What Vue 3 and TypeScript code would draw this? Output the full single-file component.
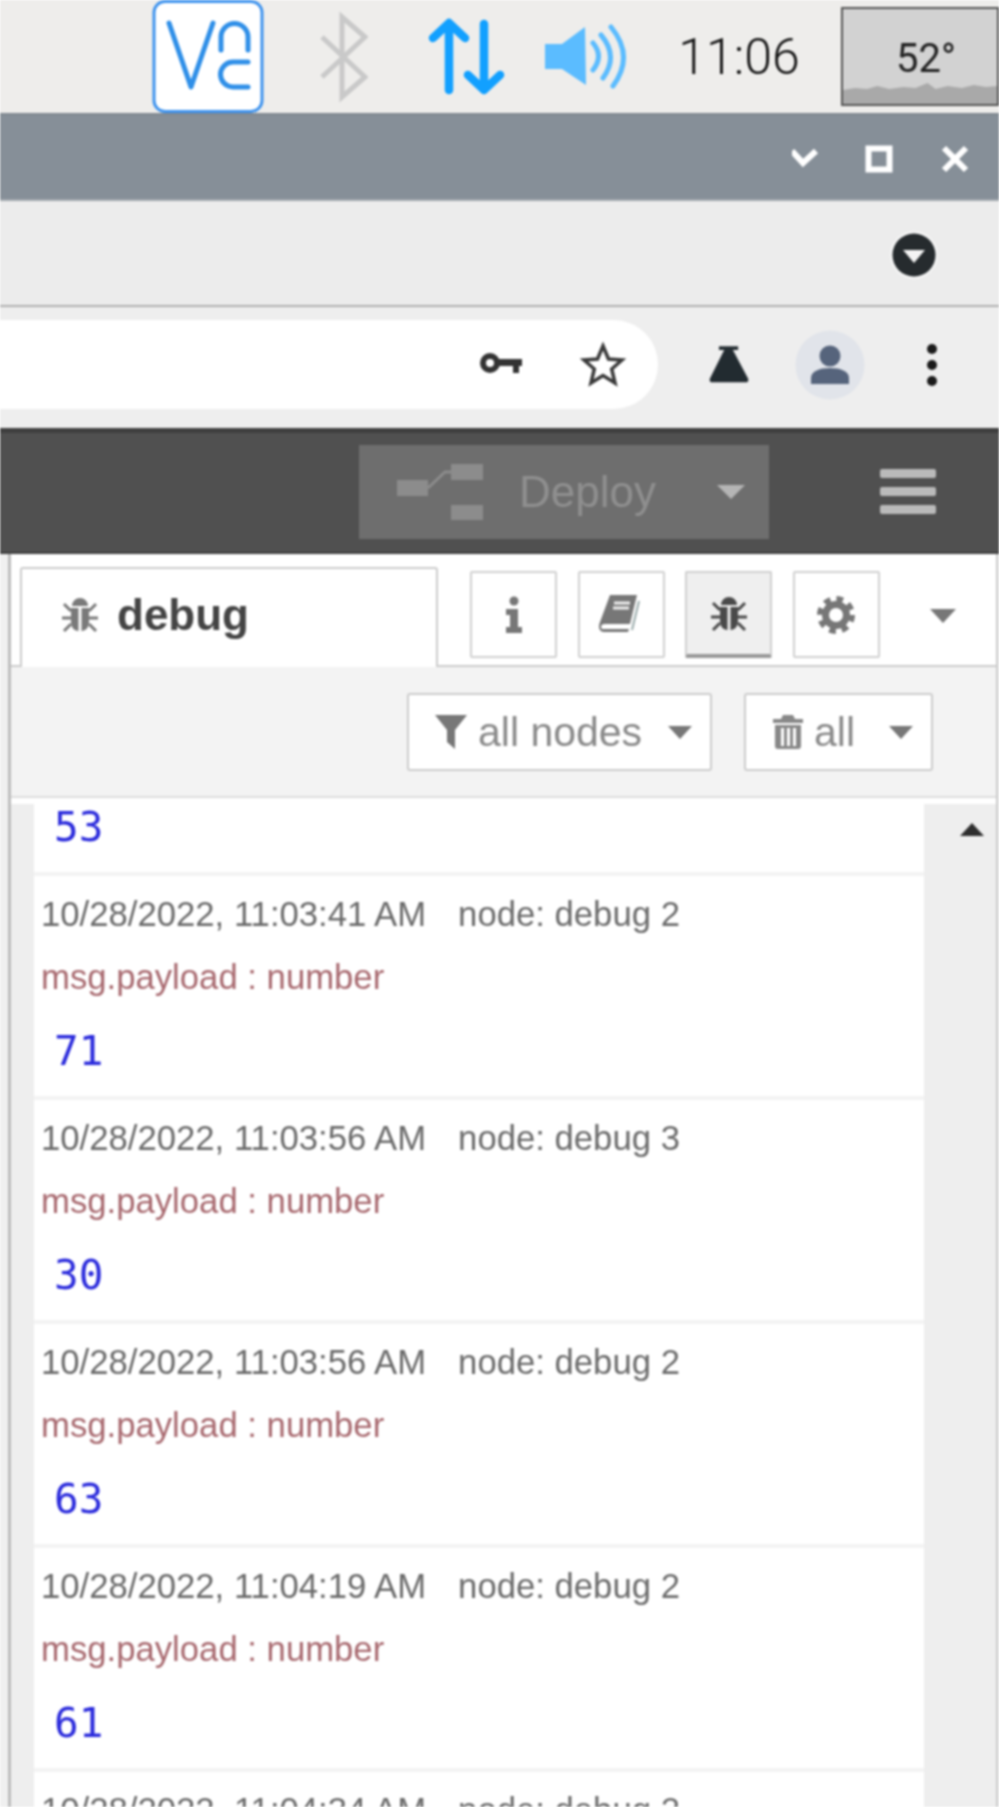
<script setup lang="ts">
interface Entry { time: string; node: string; value: string }
const entries: Entry[] = [
  { time: '10/28/2022, 11:03:41 AM', node: 'debug 2', value: '71' },
  { time: '10/28/2022, 11:03:56 AM', node: 'debug 3', value: '30' },
  { time: '10/28/2022, 11:03:56 AM', node: 'debug 2', value: '63' },
  { time: '10/28/2022, 11:04:19 AM', node: 'debug 2', value: '61' },
  { time: '10/28/2022, 11:04:34 AM', node: 'debug 2', value: '' },
]
const bugLegs = 'M11 16 4 9M11 23H2M11 29 4 36M29 16 36 9M29 23H38M29 29 36 36'
const graph = 'M0 16 L12 14 L24 15 L34 12 L46 15 L60 13 L72 14 L84 9 L92 15 L104 12 L118 14 L130 11 L142 13 L153 12 V30 H0 Z'
</script>

<template>
  <div class="screen">
    <header class="tray">
      <svg class="vnc" viewBox="0 0 112 113" width="112" height="113">
        <rect x="2" y="1.500" width="108" height="110" rx="11" fill="#fff" stroke="#3e93ee" stroke-width="3" />
        <path d="M17 23 39 87 61 23M69 50V37a13.500 13.500 0 0 1 27 0V50M96 62H81a12.500 12.500 0 0 0 0 25H96" fill="none" stroke="#2f8fe8" stroke-width="5" stroke-linecap="round" stroke-linejoin="round" />
      </svg>
      <svg class="bt" viewBox="0 0 50 113" width="50" height="113">
        <path d="M4 37 47 77 24 97V17L47 37 4 77" fill="none" stroke="#c9c9c9" stroke-width="5" />
      </svg>
      <svg class="arrows" viewBox="0 0 77 113" width="77" height="113">
        <path d="M21 90V24M5 38 21 23 37 38M56 24V90M40 75 56 90 72 75" fill="none" stroke="#12a0ff" stroke-width="8.500" stroke-linecap="round" stroke-linejoin="round" />
      </svg>
      <svg class="speaker" viewBox="0 0 84 113" width="84" height="113">
        <path d="M0 44H17L40 27 41 85 17 69H0Z" fill="#5bbcff" />
        <path d="M48 43Q59 56 48 70M56 35Q74 56 58 78M66 27Q90 56 68 86" fill="none" stroke="#5bbcff" stroke-width="5" stroke-linecap="round" />
      </svg>
      <span class="clock">11:06</span>
      <div class="temp">
        <svg class="temp-graph" viewBox="0 0 153 30" preserveAspectRatio="none"><path :d="graph" fill="#a9a9a9" /></svg>
        <span class="temp-text">52°</span>
      </div>
    </header>

    <div class="titlebar">
      <svg viewBox="0 0 180 87" width="180" height="87">
        <path d="M0 37 11 49 24 37" fill="none" stroke="#fff" stroke-width="6" />
        <rect x="76.500" y="34.500" width="21" height="21" fill="none" stroke="#fff" stroke-width="6" />
        <path d="M152 34 174 56M174 34 152 56" fill="none" stroke="#fff" stroke-width="6" />
      </svg>
    </div>

    <div class="tabstrip">
      <svg viewBox="0 0 50 50" width="50" height="50">
        <circle cx="25" cy="25" r="24" fill="#f5f5f5" />
        <circle cx="25" cy="25" r="21.500" fill="#262b2e" />
        <path d="M14 20H36L25 33Z" fill="#f4f4f4" />
      </svg>
    </div>

    <div class="toolbar">
      <div class="omnibox">
        <svg class="key" viewBox="0 0 46 26" width="46" height="26">
          <circle cx="11" cy="11" r="7" fill="none" stroke="#333" stroke-width="6" />
          <path d="M17 7H43V14H40V21H34V14H17Z" fill="#333" />
        </svg>
        <svg class="star" viewBox="0 0 48 48" width="48" height="48">
          <path d="M24 5 29.500 18 43 19 32.700 28 36 42 24 34.500 12 42 15.300 28 5 19 18.500 18Z" fill="none" stroke="#3a3a3a" stroke-width="3.500" />
        </svg>
      </div>
      <svg class="flask" viewBox="0 0 46 42" width="42" height="40">
        <path d="M12 2.500H33" stroke="#222b30" stroke-width="4" />
        <path d="M18 4H27L44 36Q45 40 41 40H5Q1 40 2 36Z" fill="#222b30" />
      </svg>
      <svg class="avatar" viewBox="0 0 70 70" width="70" height="70">
        <circle cx="35" cy="35" r="34.500" fill="#e1e4ea" />
        <circle cx="35" cy="26" r="10.500" fill="#56647c" />
        <path d="M16 54V48C16 41 25 38 35 38S54 41 54 48V54Z" fill="#56647c" />
      </svg>
      <svg class="dots" viewBox="0 0 12 44" width="12" height="44">
        <circle cx="6" cy="6" r="5" fill="#1a1a1a" /><circle cx="6" cy="22" r="5" fill="#1a1a1a" /><circle cx="6" cy="38" r="5" fill="#1a1a1a" />
      </svg>
    </div>

    <div class="nr-header">
      <div class="deploy">
        <svg class="deploy-icon" viewBox="0 0 86 56" width="86" height="56">
          <path d="M0 16H31V32H0ZM54 0H86V16H54ZM54 41H86V57H54Z" fill="#8c8c8c" />
          <path d="M31 24 48 8H54" fill="none" stroke="#8c8c8c" stroke-width="3" />
        </svg>
        <span class="deploy-label">Deploy</span>
        <svg class="deploy-caret" viewBox="0 0 28 16" width="28" height="16"><path d="M0 1H28L14 15Z" fill="#b5b5b5" /></svg>
      </div>
      <div class="hamburger"><i /><i /><i /></div>
    </div>

    <div class="sidebar">
      <div class="panel">
        <div class="tabbar">
          <div class="tab">
            <svg class="bug-svg" viewBox="0 0 40 40" width="40" height="40">
              <path d="M12 11a8 8 0 0 1 16 0ZM11 13H18.500V36C14 36 11 32 11 27ZM21.500 13H29V27C29 32 26 36 21.500 36Z" fill="#7a7a7a" />
              <path :d="bugLegs" stroke="#7a7a7a" stroke-width="3" fill="none" />
            </svg>
            <span class="tab-label">debug</span>
          </div>
          <div class="tool">
            <svg viewBox="0 0 20 38" width="20" height="38">
              <circle cx="10" cy="5" r="4.500" fill="#777" />
              <path d="M2 13H14V31H18V37H2V31H6V19H2Z" fill="#777" />
            </svg>
          </div>
          <div class="tool">
            <svg viewBox="0 0 44 42" width="44" height="42">
              <path d="M11 1H38L31 30H6C2 30 1 33 3 35H30L29 38H5C0 38 -1 33 1 28Z" fill="#777" />
              <path d="M15 9H31M14 14H30" stroke="#eee" stroke-width="3" />
              <path d="M40 7 33 36" stroke="#9aa" stroke-width="2" />
            </svg>
          </div>
          <div class="tool tool-active">
            <svg viewBox="0 0 40 40" width="40" height="40">
              <path d="M12 11a8 8 0 0 1 16 0ZM11 13H18.500V36C14 36 11 32 11 27ZM21.500 13H29V27C29 32 26 36 21.500 36Z" fill="#4a4a4a" />
              <path :d="bugLegs" stroke="#4a4a4a" stroke-width="3" fill="none" />
            </svg>
          </div>
          <div class="tool">
            <svg viewBox="0 0 40 40" width="40" height="40">
              <circle cx="20" cy="20" r="10.500" fill="none" stroke="#777" stroke-width="7" />
              <circle cx="20" cy="20" r="16" fill="none" stroke="#777" stroke-width="6" stroke-dasharray="6.560 6" />
            </svg>
          </div>
          <svg class="tab-caret" viewBox="0 0 26 14" width="26" height="14"><path d="M0 0H26L13 14Z" fill="#777" /></svg>
        </div>

        <div class="filters">
          <button class="filter-btn filter-nodes">
            <svg viewBox="0 0 32 34" width="32" height="34"><path d="M0 0H32L20 15V34L12 27V15Z" fill="#777" /></svg>
            <span>all nodes</span>
            <svg class="btn-caret" viewBox="0 0 24 13" width="24" height="13"><path d="M0 0H24L12 13Z" fill="#777" /></svg>
          </button>
          <button class="filter-btn filter-all">
            <svg viewBox="0 0 30 34" width="30" height="34"><path d="M10 0H20L22 4H30V8H0V4H8ZM2 10H28V31Q28 34 25 34H5Q2 34 2 31ZM8 13V31H11V13ZM14 13V31H17V13ZM20 13V31H23V13Z" fill="#888" fill-rule="evenodd" /></svg>
            <span>all</span>
            <svg class="btn-caret" viewBox="0 0 24 13" width="24" height="13"><path d="M0 0H24L12 13Z" fill="#777" /></svg>
          </button>
        </div>

        <div class="list">
          <div class="gutter" />
          <div class="messages">
            <div class="entry entry-clipped"><div class="value">53</div></div>
            <div v-for="(e, i) in entries" :key="i" class="entry">
              <div class="meta"><span class="time">{{ e.time }}</span><span class="node">node: {{ e.node }}</span></div>
              <div class="type">msg.payload : number</div>
              <div class="value">{{ e.value }}</div>
            </div>
          </div>
          <div class="scrollbar">
            <svg viewBox="0 0 24 13" width="24" height="13"><path d="M0 13 12 0 24 13Z" fill="#2e2e2e" /></svg>
          </div>
        </div>
      </div>
    </div>
  </div>
</template>

<style>
html, body { margin: 0; background: #fff; }
</style>

<style scoped>
.screen {
  width: 999px;
  height: 1807px;
  overflow: hidden;
  display: flex;
  flex-direction: column;
  font-family: "Liberation Sans", Arial, sans-serif;
  filter: blur(0.8px);
}
svg { display: block; flex: none; }

.tray {
  height: 113px;
  flex: none;
  display: flex;
  align-items: center;
  background: #eeedeb;
  padding-left: 152px;
}
.bt { margin-left: 54px; }
.arrows { margin-left: 60px; }
.speaker { margin-left: 40px; }
.clock {
  margin-left: 48px;
  width: 124px;
  font-family: Roboto, sans-serif;
  font-weight: 300;
  font-size: 50px;
  color: #111;
  text-align: center;
}
.temp {
  margin-left: 40px;
  width: 158px;
  height: 99px;
  box-sizing: border-box;
  border: 2px solid #555;
  background: #d2d2d2;
  position: relative;
  display: flex;
  align-items: center;
  justify-content: center;
}
.temp-graph { position: absolute; left: 0; right: 0; bottom: 0; width: 100%; height: 30px; }
.temp-text {
  position: relative;
  top: 2px;
  font-family: Roboto, sans-serif;
  font-size: 40px;
  color: #222;
  margin-left: 12px;
}

.titlebar {
  height: 88px;
  flex: none;
  background: #868f98;
  border-top: 2px solid #808890;
  border-bottom: 2px solid #a2a8ae;
  box-sizing: border-box;
  display: flex;
  justify-content: flex-end;
  align-items: center;
  padding-right: 27px;
}
.tabstrip {
  height: 106px;
  flex: none;
  box-sizing: border-box;
  background: #ececec;
  border-bottom: 2px solid #b0b0b0;
  display: flex;
  justify-content: flex-end;
  align-items: center;
  padding: 3px 60px 0 0;
}
.toolbar {
  height: 121px;
  flex: none;
  box-sizing: border-box;
  background: #eeeeee;
  padding: 13px 0 19px;
  display: flex;
  align-items: center;
}
.omnibox {
  width: 658px;
  height: 89px;
  background: #fff;
  border-radius: 0 45px 45px 0;
  display: flex;
  align-items: center;
  justify-content: flex-end;
}
.key { margin-right: 54px; }
.star { margin-right: 31px; }
.flask { margin-left: 50px; }
.avatar { margin-left: 45px; }
.dots { margin-left: 61px; }

.nr-header {
  height: 126px;
  flex: none;
  box-sizing: border-box;
  background: #505050;
  border-top: 5px solid #3f3f3f;
  border-bottom: 2px solid #3f3f3f;
  display: flex;
  align-items: center;
  padding: 0 63px 2px 359px;
}
.deploy {
  width: 410px;
  height: 94px;
  background: #6e6e6e;
  display: flex;
  align-items: center;
  padding-left: 38px;
  box-sizing: border-box;
}
.deploy-label {
  margin-left: 36px;
  font-size: 44px;
  color: #8f8f8f;
}
.deploy-caret { margin-left: 61px; }
.hamburger {
  margin-left: auto;
  width: 56px;
  display: flex;
  flex-direction: column;
  gap: 9px;
}
.hamburger i {
  display: block;
  height: 9px;
  border-radius: 2px;
  background: #bababa;
}

.sidebar {
  flex: 1;
  min-height: 0;
  display: flex;
  background: #f0f0f0;
  padding-left: 8px;
}
.panel {
  flex: 1;
  min-width: 0;
  display: flex;
  flex-direction: column;
  border-left: 3px solid #bdbdbd;
  border-right: 2px solid #ccc;
  margin-right: 1px;
  background: #fff;
}
.tabbar {
  height: 113px;
  flex: none;
  box-sizing: border-box;
  border-bottom: 2px solid #ccc;
  display: flex;
  align-items: flex-start;
  padding: 13px 0 0 9px;
  position: relative;
}
.tab {
  width: 418px;
  height: 100px;
  box-sizing: border-box;
  border: 2px solid #ccc;
  border-bottom: none;
  border-radius: 3px 3px 0 0;
  background: #fff;
  display: flex;
  align-items: center;
  padding: 0 0 6px 38px;
  margin-right: 32px;
}
.tab-label {
  margin-left: 17px;
  font-size: 44px;
  font-weight: 700;
  color: #444;
}
.tool {
  width: 87px;
  height: 87px;
  margin-top: 4px;
  margin-right: 20.500px;
  box-sizing: border-box;
  border: 2px solid #d0d0d0;
  border-radius: 2px;
  display: flex;
  align-items: center;
  justify-content: center;
  background: #fff;
}
.tool-active {
  background: #efefef;
  border-bottom: 4px solid #999;
}
.tab-caret { margin: 42px 0 0 30px; }

.filters {
  height: 131px;
  flex: none;
  box-sizing: border-box;
  background: #f3f3f3;
  border-bottom: 2px solid #ddd;
  display: flex;
  align-items: flex-start;
  padding: 26px 0 0 396px;
}
.filter-btn {
  height: 78px;
  box-sizing: border-box;
  border: 2px solid #ccc;
  border-radius: 3px;
  background: #fff;
  padding: 0;
  display: flex;
  align-items: center;
  font-family: inherit;
  font-size: 41px;
  color: #8a8a8a;
}
.filter-nodes { width: 305px; padding-left: 26px; margin-right: 32px; }
.filter-all { width: 189px; padding-left: 27px; }
.filter-btn span { margin-left: 11px; }
.btn-caret { margin-left: auto; margin-right: 18px; }

.list {
  flex: 1;
  min-height: 0;
  display: flex;
  padding-top: 6px;
}
.gutter { width: 23px; flex: none; background: #eee; }
.messages { flex: 1; min-width: 0; overflow: hidden; margin-top: -6px; }
.scrollbar {
  width: 72px;
  flex: none;
  background: #eee;
  display: flex;
  justify-content: center;
  padding-top: 19px;
  padding-left: 24px;
  box-sizing: border-box;
}
.entry {
  height: 224px;
  box-sizing: border-box;
  border-bottom: 4px solid #f3f3f3;
  padding-left: 7px;
}
.entry-clipped {
  height: 78px;
  padding-top: 5px;
}
.entry-clipped .value { margin-top: 0; }
.meta {
  padding-top: 18px;
  height: 40px;
  line-height: 40px;
  font-size: 34.700px;
  color: #6b6b6b;
  box-sizing: content-box;
}
.time { margin-right: 32px; }
.type {
  margin-top: 23px;
  height: 40px;
  line-height: 40px;
  font-size: 34.700px;
  color: #a8696f;
}
.value {
  margin-top: 30px;
  padding-left: 13px;
  height: 48px;
  line-height: 48px;
  font-family: "DejaVu Sans Mono", monospace;
  font-size: 41px;
  color: #2b2bdc;
}
</style>
